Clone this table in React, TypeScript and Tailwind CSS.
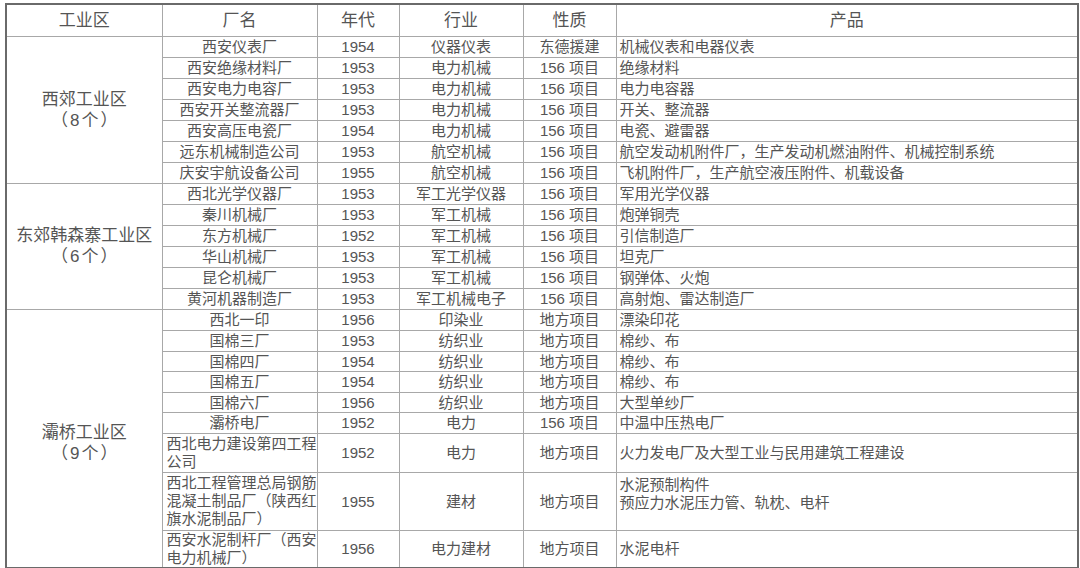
import React from 'react';

type Row = {
    name: React.ReactNode;
    year: string;
    trade: string;
    kind: string;
    product: React.ReactNode;
    h: number;
    multi?: boolean;
    top?: boolean;
};

type Group = { label: string; count: string; pad: string; rows: Row[] };

const groups: Group[] = [
    {
        label: '西郊工业区',
        count: '（8个）',
        pad: '',
        rows: [
            { name: '西安仪表厂', year: '1954', trade: '仪器仪表', kind: '东德援建', product: '机械仪表和电器仪表', h: 21 },
            { name: '西安绝缘材料厂', year: '1953', trade: '电力机械', kind: '156 项目', product: '绝缘材料', h: 21 },
            { name: '西安电力电容厂', year: '1953', trade: '电力机械', kind: '156 项目', product: '电力电容器', h: 21 },
            { name: '西安开关整流器厂', year: '1953', trade: '电力机械', kind: '156 项目', product: '开关、整流器', h: 21 },
            { name: '西安高压电瓷厂', year: '1954', trade: '电力机械', kind: '156 项目', product: '电瓷、避雷器', h: 21 },
            { name: '远东机械制造公司', year: '1953', trade: '航空机械', kind: '156 项目', product: '航空发动机附件厂，生产发动机燃油附件、机械控制系统', h: 21 },
            { name: '庆安宇航设备公司', year: '1955', trade: '航空机械', kind: '156 项目', product: '飞机附件厂，生产航空液压附件、机载设备', h: 21 },
        ],
    },
    {
        label: '东郊韩森寨工业区',
        count: '（6个）',
        pad: '',
        rows: [
            { name: '西北光学仪器厂', year: '1953', trade: '军工光学仪器', kind: '156 项目', product: '军用光学仪器', h: 21 },
            { name: '秦川机械厂', year: '1953', trade: '军工机械', kind: '156 项目', product: '炮弹铜壳', h: 21 },
            { name: '东方机械厂', year: '1952', trade: '军工机械', kind: '156 项目', product: '引信制造厂', h: 21 },
            { name: '华山机械厂', year: '1953', trade: '军工机械', kind: '156 项目', product: '坦克厂', h: 21 },
            { name: '昆仑机械厂', year: '1953', trade: '军工机械', kind: '156 项目', product: '钢弹体、火炮', h: 21 },
            { name: '黄河机器制造厂', year: '1953', trade: '军工机械电子', kind: '156 项目', product: '高射炮、雷达制造厂', h: 21 },
        ],
    },
    {
        label: '灞桥工业区',
        count: '（9个）',
        pad: 'pt-[9px]',
        rows: [
            { name: '西北一印', year: '1956', trade: '印染业', kind: '地方项目', product: '漂染印花', h: 21 },
            { name: '国棉三厂', year: '1953', trade: '纺织业', kind: '地方项目', product: '棉纱、布', h: 21 },
            { name: '国棉四厂', year: '1954', trade: '纺织业', kind: '地方项目', product: '棉纱、布', h: 20 },
            { name: '国棉五厂', year: '1954', trade: '纺织业', kind: '地方项目', product: '棉纱、布', h: 21 },
            { name: '国棉六厂', year: '1956', trade: '纺织业', kind: '地方项目', product: '大型单纱厂', h: 20 },
            { name: '灞桥电厂', year: '1952', trade: '电力', kind: '156 项目', product: '中温中压热电厂', h: 21 },
            {
                name: <>西北电力建设第四工程<br />公司</>,
                year: '1952', trade: '电力', kind: '地方项目',
                product: '火力发电厂及大型工业与民用建筑工程建设', h: 39, multi: true,
            },
            {
                name: <>西北工程管理总局钢筋<br />混凝土制品厂（陕西红<br />旗水泥制品厂）</>,
                year: '1955', trade: '建材', kind: '地方项目',
                product: <>水泥预制构件<br />预应力水泥压力管、轨枕、电杆</>, h: 58, multi: true, top: true,
            },
            {
                name: <>西安水泥制杆厂（西安<br />电力机械厂）</>,
                year: '1956', trade: '电力建材', kind: '地方项目',
                product: '水泥电杆', h: 37, multi: true,
            },
        ],
    },
];

const cell = 'border border-[#a8a8a8] p-0 align-middle';

export default function App() {
    return (
        <div
            className="w-[1080px] h-[568px] bg-white overflow-hidden pt-[3px] pl-[5px] text-[#555] text-[15px]"
            style={{ fontFamily: '"Liberation Sans", "Noto Sans CJK SC", sans-serif' }}
        >
            <table className="border-collapse table-fixed w-[1072px] border-2 border-[#6a6a6a]">
                <colgroup>
                    <col className="w-[156px]" />
                    <col className="w-[155px]" />
                    <col className="w-[82px]" />
                    <col className="w-[124px]" />
                    <col className="w-[93px]" />
                    <col className="w-[462px]" />
                </colgroup>
                <thead>
                    <tr className="h-[32px] text-[17px]">
                        {['工业区', '厂名', '年代', '行业', '性质', '产品'].map(t => (
                            <th key={t} className={`${cell} font-normal text-center`}>{t}</th>
                        ))}
                    </tr>
                </thead>
                <tbody>
                    {groups.map(g =>
                        g.rows.map((r, i) => (
                            <tr key={g.label + i} style={{ height: r.h }} className="leading-[19px]">
                                {i === 0 && (
                                    <td rowSpan={g.rows.length} className={`${cell} text-center text-[17px] leading-[21px] ${g.pad}`}>
                                        <div>{g.label}</div>
                                        <div className="tracking-[2px] pl-[2px]">{g.count}</div>
                                    </td>
                                )}
                                <td className={`${cell} whitespace-nowrap ${r.multi ? 'text-left pl-[4px] leading-[18px]' : 'text-center'}`}>
                                    {r.name}
                                </td>
                                <td className={`${cell} text-center`}>{r.year}</td>
                                <td className={`${cell} text-center`}>{r.trade}</td>
                                <td className={`${cell} text-center`}>{r.kind}</td>
                                <td className={`${cell} text-left pl-[3px] whitespace-nowrap ${r.top ? '!align-top pt-[3px] leading-[18px]' : ''}`}>
                                    {r.product}
                                </td>
                            </tr>
                        )),
                    )}
                </tbody>
            </table>
        </div>
    );
}
